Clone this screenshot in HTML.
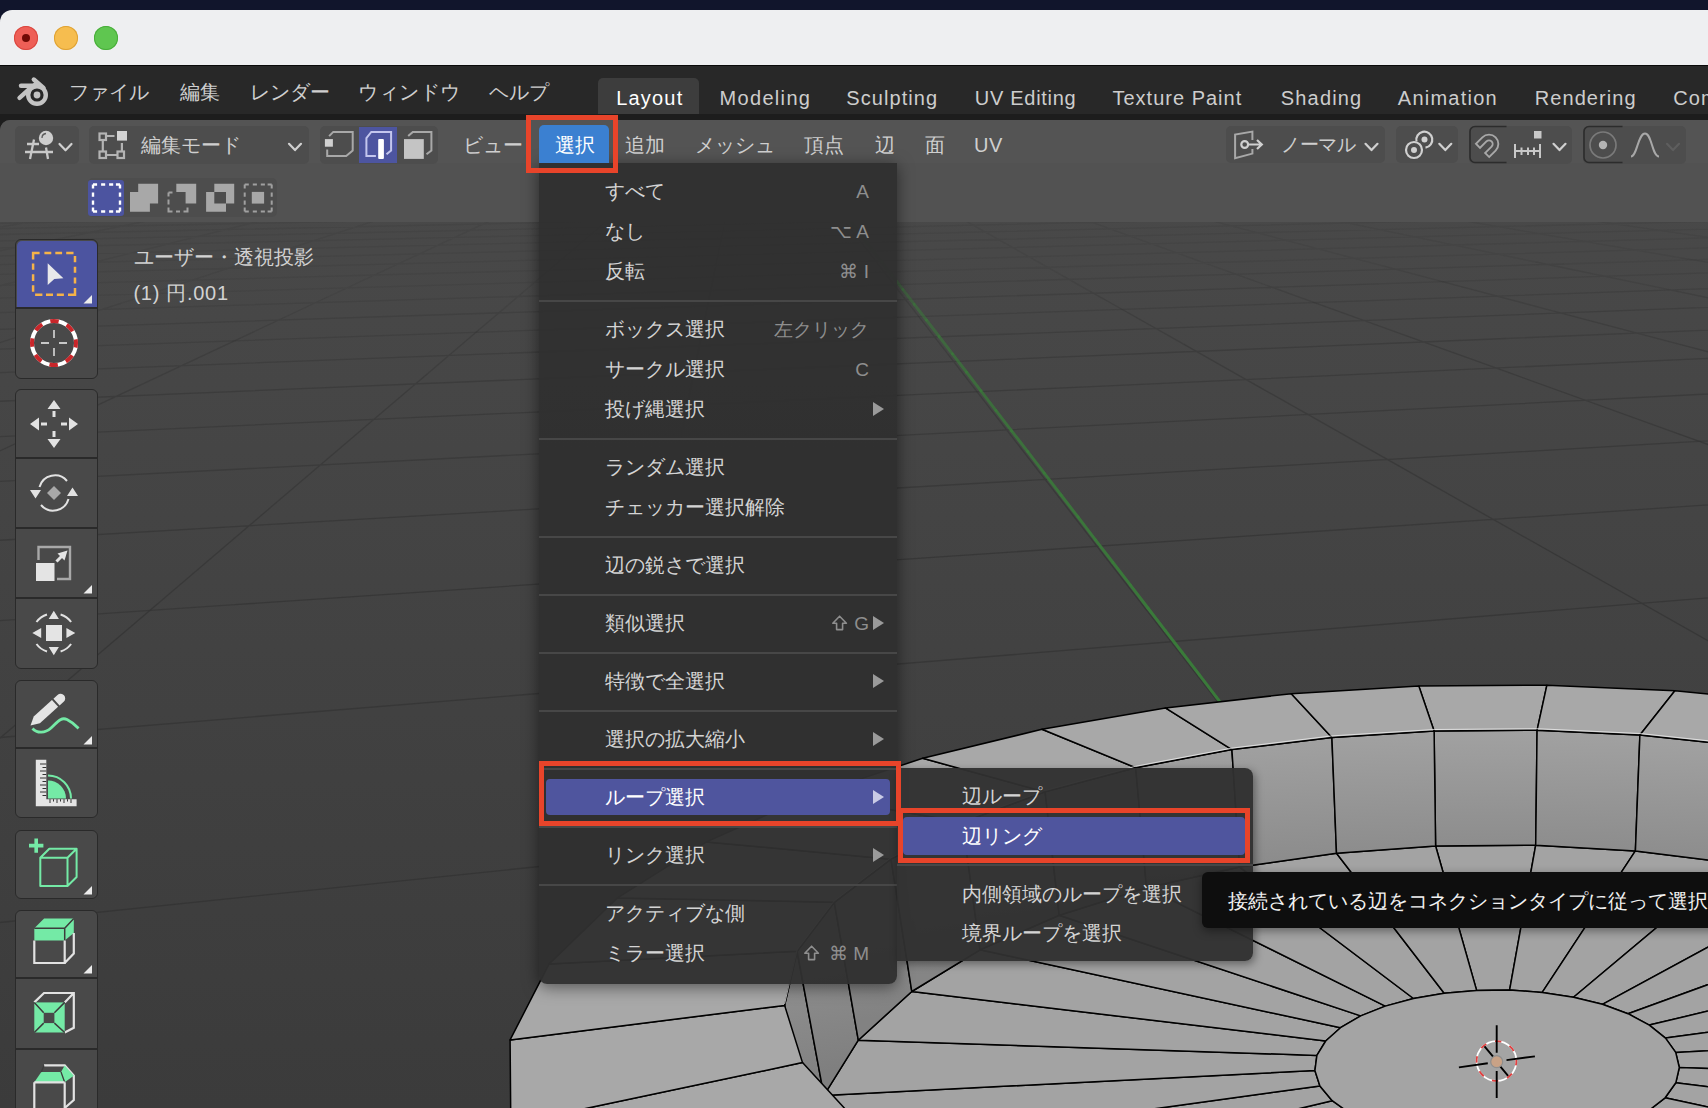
<!DOCTYPE html>
<html><head><meta charset="utf-8"><title>Blender</title>
<style>
html,body{margin:0;padding:0;width:1708px;height:1108px;overflow:hidden;}
body{background:#11152c;font-family:"Liberation Sans",sans-serif;}
#w{position:relative;width:1708px;height:1108px;overflow:hidden;}
.r{position:absolute;box-sizing:content-box;}
.t{position:absolute;white-space:nowrap;}
</style></head><body><div id="w">
<div class="r" style="left:0px;top:10px;width:1708px;height:56px;background:#eeeff1;border-top-left-radius:12px;"></div>
<div class="r" style="left:0px;top:65px;width:1708px;height:1px;background:#0a0a0a;"></div>
<div class="r" style="left:14px;top:26px;width:24px;height:24px;border-radius:50%;background:#ee5f57;box-shadow:inset 0 0 0 1px #d9473f"></div><div class="r" style="left:22px;top:34px;width:8px;height:8px;border-radius:50%;background:#700a05"></div><div class="r" style="left:54px;top:26px;width:24px;height:24px;border-radius:50%;background:#f6bd4f;box-shadow:inset 0 0 0 1px #dea235"></div><div class="r" style="left:94px;top:26px;width:24px;height:24px;border-radius:50%;background:#5fc650;box-shadow:inset 0 0 0 1px #48ad3a"></div><div class="r" style="left:0px;top:66px;width:1708px;height:48px;background:#282828;"></div>
<div class="r" style="left:0px;top:114px;width:1708px;height:30px;background:#1d1d1d;"></div>
<svg class="r" style="left:0;top:66px" width="60" height="48" viewBox="0 66 60 48">
<circle cx="37" cy="95" r="8.8" fill="none" stroke="#c4c4c4" stroke-width="4.4"/>
<circle cx="37" cy="95" r="3.4" fill="#c4c4c4"/>
<path d="M19.5 97.8L30 88.5" stroke="#c4c4c4" stroke-width="4.4" stroke-linecap="round"/>
<path d="M21 85.7H35" stroke="#c4c4c4" stroke-width="4.4" stroke-linecap="round"/>
<path d="M33.8 79.5L43.5 88" stroke="#c4c4c4" stroke-width="4.4" stroke-linecap="round"/>
<path d="M28.5 90L35 84.5L40 86" stroke="#c4c4c4" stroke-width="4" fill="none"/>
</svg>
<div class="t" style="left:69px;top:82.0px;font-size:20px;line-height:20px;color:#cfcfcf;">ファイル</div>
<div class="t" style="left:180px;top:82.0px;font-size:20px;line-height:20px;color:#cfcfcf;">編集</div>
<div class="t" style="left:250px;top:82.0px;font-size:20px;line-height:20px;color:#cfcfcf;">レンダー</div>
<div class="t" style="left:358px;top:82.0px;font-size:20px;line-height:20px;color:#cfcfcf;letter-spacing:0.6px;">ウィンドウ</div>
<div class="t" style="left:489px;top:82.0px;font-size:20px;line-height:20px;color:#cfcfcf;">ヘルプ</div>
<div class="r" style="left:598px;top:78px;width:101px;height:36px;background:#3d3d3d;border-radius:5px 5px 0 0;"></div>
<div class="t lat" style="left:616.2px;top:87.5px;font-size:20px;line-height:20px;color:#ffffff;letter-spacing:1.2px">Layout</div>
<div class="t lat" style="left:719.5px;top:87.5px;font-size:20px;line-height:20px;color:#cdcdcd;letter-spacing:1.33px">Modeling</div>
<div class="t lat" style="left:846.3px;top:87.5px;font-size:20px;line-height:20px;color:#cdcdcd;letter-spacing:1.06px">Sculpting</div>
<div class="t lat" style="left:974.8px;top:87.5px;font-size:20px;line-height:20px;color:#cdcdcd;letter-spacing:0.71px">UV Editing</div>
<div class="t lat" style="left:1112.5px;top:87.5px;font-size:20px;line-height:20px;color:#cdcdcd;letter-spacing:1.0px">Texture Paint</div>
<div class="t lat" style="left:1280.8px;top:87.5px;font-size:20px;line-height:20px;color:#cdcdcd;letter-spacing:1.17px">Shading</div>
<div class="t lat" style="left:1397.8px;top:87.5px;font-size:20px;line-height:20px;color:#cdcdcd;letter-spacing:1.25px">Animation</div>
<div class="t lat" style="left:1534.8px;top:87.5px;font-size:20px;line-height:20px;color:#cdcdcd;letter-spacing:1.06px">Rendering</div>
<div class="t lat" style="left:1673.3px;top:87.5px;font-size:20px;line-height:20px;color:#cdcdcd;letter-spacing:1.1px">Compositing</div>
<div class="r" style="left:0;top:120px;width:1708px;height:988px;border-top-left-radius:10px;overflow:hidden;background:linear-gradient(#4a4a4a,#3b3b3b)"><svg width="1708" height="1108" viewBox="0 0 1708 1108" style="position:absolute;left:0;top:-120px"><path d="M1563.2 264.0L1713.3 259.3M-42.8 299.3L1733.2 247.2M-96.8 288.1L1758.9 236.5M-42.7 275.5L1790.1 226.9M-101.6 267.1L1736.5 220.6M-53.0 257.1L1774.5 212.7M-9.9 248.2L1727.1 207.6M-71.8 242.5L1770.8 201.0M-31.6 235.2L1727.9 196.9M-97.8 230.7L1776.7 191.3M-59.8 224.5L1737.3 187.8M-25.1 218.9L1790.7 182.9M-94.1 215.7L1754.1 180.0M-60.5 210.8L1719.8 177.4M-29.6 206.4L1777.4 173.3M-101.6 204.0L1745.0 171.0M-71.1 200.1L1714.5 168.9M-42.8 196.5L1775.8 165.3M-16.5 193.1L1746.6 163.5M-89.9 191.5L1718.9 161.8M-63.5 188.5L1783.8 158.7M-38.8 185.6L1756.9 157.2M-15.6 182.9L1731.4 155.8M-91.0 181.9L1799.9 153.0M-67.3 179.5L1774.9 151.7M-45.0 177.2L1750.9 150.6M-24.0 175.0L1728.1 149.4M-102.0 174.4L1799.5 147.0M-80.3 172.4L1776.9 146.0M-59.7 170.5L1755.2 145.1M-40.2 168.7L1734.4 144.1M-21.6 166.9L1714.4 143.3M-101.0 166.6L1788.0 141.2M-81.7 165.0L1768.0 140.4M-63.3 163.5L1748.8 139.6M-45.7 162.0L1730.2 138.9M-28.9 160.6L1806.9 137.0M-12.8 159.3L1788.2 136.3M-92.8 159.2L1770.2 135.7M-75.8 158.0L1752.7 135.1M-59.6 156.7L1735.9 134.5M-44.0 155.6L1719.5 134.0M-29.1 154.5L1798.0 132.3M-14.7 153.4L1781.4 131.8M-96.1 153.5L1765.3 131.3M-80.9 152.5L1749.7 130.8M-66.2 151.5L1734.6 130.3M-52.0 150.5L1719.9 129.9M-38.3 149.6L1800.4 128.4M-25.2 148.7L1785.4 127.9M-12.4 147.9L1770.8 127.6M-94.8 148.1L1756.6 127.2M-81.2 147.3L1742.8 126.8M-68.0 146.5L1729.3 126.4M-55.3 145.7L1716.2 126.1M-43.0 145.0L1798.3 124.7M-31.0 144.2L1784.8 124.4M-19.5 143.5L1771.7 124.1M-8.3 142.9L1758.9 123.8M-91.2 143.2L1746.4 123.5M-79.1 142.5L1734.2 123.2M-67.4 141.9L1722.2 122.9M-56.0 141.3L1806.3 121.6M-45.0 140.7L1794.0 121.4M-34.2 140.1L1781.9 121.1M-23.8 139.5L1770.2 120.9M-13.6 138.9L1758.7 120.7M-98.0 139.4L1747.4 120.4M-87.0 138.8L1736.4 120.2M-76.3 138.3L1725.6 120.0M-65.9 137.8L1715.1 119.8M-55.8 137.3L1800.2 118.6M-45.9 136.8L1789.2 118.4M-36.3 136.3L1778.5 118.2M-26.9 135.8L1768.0 118.0M-17.7 135.4L1757.7 117.8M-8.8 134.9L1747.5 117.6M-93.4 135.4L1737.6 117.5M-83.7 135.0L1727.9 117.3M-74.2 134.6L1718.3 117.1M-64.9 134.1L1805.0 116.0M-55.9 133.7L1795.0 115.9M-47.0 133.3L1785.3 115.7M-38.4 132.9L1775.7 115.6M-29.9 132.6L1766.3 115.4M-21.7 132.2L1757.0 115.3M-13.6 131.8L1747.9 115.1M-5.7 131.5L1739.0 115.0M-90.6 132.0L1730.2 114.9M-82.0 131.6L1721.6 114.7M-73.5 131.3L1713.1 114.6M-65.2 131.0L1800.6 113.6M-57.1 130.6L1791.7 113.5M-49.2 130.3L1783.0 113.3M-41.4 130.0L1774.4 113.2M-33.8 129.7L1765.9 113.1M-26.3 129.4L1757.6 113.0M-19.0 129.1L1749.4 112.9M-11.8 128.8L1741.4 112.8M-98.1 129.3L1733.4 112.7M-90.2 129.0L1725.6 112.6M-82.5 128.7L1717.9 112.5M-74.9 128.5L1806.8 111.5M-67.4 128.2L1798.7 111.4M-60.1 127.9L1790.8 111.3M-52.9 127.6L1782.9 111.2M-45.9 127.4L1775.2 111.1M-39.0 127.1L1767.6 111.1M-32.2 126.9L1760.1 111.0M-25.5 126.6L1752.7 110.9M-19.0 126.4L1745.4 110.8M-12.6 126.1L1738.2 110.7M-6.2 125.9L1731.1 110.7M-92.4 126.5L1724.1 110.6M-85.5 126.2L1717.2 110.5M-78.6 126.0L1807.0 109.6M-71.9 125.8L1799.8 109.5M-65.3 125.6L1792.6 109.4M-58.7 125.3L1785.5 109.4M-52.3 125.1L1778.6 109.3M-46.0 124.9L1771.7 109.2M-39.9 124.7L1671.4 110.0M-33.8 124.5L1665.2 109.9M-27.8 124.3L1659.1 109.8M-21.9 124.1L1653.1 109.8M-16.1 123.9L1647.1 109.7M-10.3 123.7L1641.2 109.6M-97.5 124.3L1635.4 109.6M-91.2 124.1L1629.6 109.5M-85.0 123.9L1624.0 109.4M-78.9 123.7L1618.4 109.4M-72.8 123.5L1531.3 110.0M-66.9 123.3L1526.3 109.9M-61.0 123.1L1521.3 109.9M-55.2 123.0L1516.4 109.8M-49.6 122.8L1511.6 109.7M-44.0 122.6L1434.0 110.3M-38.4 122.4L1363.3 110.8M-33.0 122.3L1359.4 110.7M56.6 121.4L1295.6 111.1M134.7 120.6L1188.4 111.9M260.1 119.5L1140.8 112.2M357.7 118.6L1028.2 113.0M539.1 117.0L885.4 114.1M-84.2 124.2L8.0 121.4M-62.4 124.0L27.2 121.2M-40.7 123.8L46.3 121.1M-19.2 123.7L65.3 120.9M-90.5 126.5L84.2 120.8M-66.3 126.3L103.0 120.6M-42.2 126.1L121.8 120.5M-18.2 125.9L140.4 120.3M-86.5 129.0L159.0 120.2M-59.6 128.8L177.5 120.0M-32.8 128.5L195.9 119.9M-6.2 128.3L214.3 119.7M-69.7 131.7L232.6 119.6M-39.9 131.4L250.7 119.4M-10.3 131.1L268.9 119.3M-70.8 134.8L286.9 119.1M-37.6 134.4L304.9 119.0M-97.5 138.5L322.7 118.8M-60.5 138.1L340.5 118.7M-23.8 137.7L358.3 118.5M-77.6 142.1L375.9 118.4M-36.6 141.6L393.5 118.3M-87.1 146.4L411.0 118.1M-41.6 145.9L428.5 118.0M-87.2 151.0L445.8 117.8M-36.7 150.5L463.1 117.7M-75.7 156.1L480.3 117.5M-19.9 155.4L497.5 117.4M-50.3 161.4L514.6 117.3M-77.1 168.0L531.6 117.1M-8.5 167.1L548.5 117.0M-22.6 174.1L565.4 116.9M-29.5 181.8L582.2 116.7M-27.5 190.0L598.9 116.6M-14.9 198.9L615.6 116.4M-73.7 220.8L632.2 116.3M-27.7 231.8L648.7 116.2M-40.7 259.0L665.2 116.0M-16.9 290.0L681.5 115.9M120.0 303.6L697.9 115.8M326.6 297.5L714.1 115.6M523.6 291.8L730.3 115.5M714.9 270.0L746.5 115.4M879.1 265.5L762.5 115.2M1062.8 275.9L778.5 115.1M1227.2 271.1L794.5 115.0M1384.7 266.4L810.3 114.9M1535.7 262.0L826.1 114.7M1680.7 257.8L841.9 114.6M1739.0 241.9L857.6 114.5M1779.1 227.8L873.2 114.3M1720.2 206.0L888.7 114.2M1730.3 195.4L904.2 114.1M1730.4 185.9L919.7 114.0M1722.2 177.4L935.1 113.8M1793.9 176.1L950.4 113.7M1772.5 168.5L965.6 113.6M1746.0 161.7L980.8 113.5M1715.6 155.6L996.0 113.3M1768.9 154.8L1011.0 113.2M1730.7 149.3L1026.1 113.1M1778.8 148.7L1041.0 113.0M1734.4 143.8L1055.9 112.8M1777.8 143.2L1070.8 112.7M1728.8 138.9L1085.6 112.6M1768.0 138.4L1100.3 112.5M1715.5 134.5L1115.0 112.4M1751.0 134.1L1129.6 112.2M1786.2 133.7L1144.2 112.1M1728.3 130.3L1158.7 112.0M1760.2 129.9L1173.1 111.9M1791.8 129.6L1187.5 111.8M1729.8 126.6L1201.9 111.7M1758.6 126.3L1216.2 111.5M1787.1 125.9L1230.4 111.4M1722.3 123.3L1244.6 111.3M1748.3 123.0L1258.7 111.2M1774.0 122.8L1272.8 111.1M1799.6 122.5L1286.8 111.0M1730.9 120.2L1300.8 110.8M1754.2 120.0L1314.7 110.7M1777.4 119.7L1328.6 110.6M1800.4 119.5L1342.4 110.5M1729.0 117.5L1356.1 110.4M1750.0 117.3L1369.8 110.3M1770.9 117.1L1383.5 110.2M1791.6 116.9L1397.1 110.1M1718.6 115.1L1410.7 110.0M1737.5 114.9L1424.2 109.8M1756.4 114.8L1437.6 109.7M1775.2 114.6L1451.1 109.6M1793.8 114.4L1464.4 109.5M1718.4 112.9L1477.7 109.4M1735.5 112.7L1491.0 109.3M1752.5 112.6L1504.2 109.2M1769.4 112.4L1517.4 109.1M1786.2 112.3L1608.9 110.0M1802.9 112.1L1623.2 109.9M1724.9 110.8L1637.3 109.7M1740.2 110.7L1651.5 109.6M1755.4 110.6L1665.5 109.5M1770.6 110.4L1679.5 109.4M1785.7 110.3L1693.5 109.3M1800.8 110.2L1707.4 109.2" stroke="#333333" stroke-opacity="0.16" stroke-width="1.3" fill="none"/>
<path d="M1378.2 283.8L1782.6 270.4M-105.0 315.8L1563.2 264.0M56.6 324.2L120.0 303.6M285.1 317.0L326.6 297.5M502.0 310.2L523.6 291.8M708.0 303.7L714.9 270.0M903.9 297.5L879.1 265.5M1090.6 291.6L1062.8 275.9M1268.6 286.0L1227.2 271.1M1438.5 280.6L1384.7 266.4M1669.1 289.7L1535.7 262.0M1756.1 270.6L1680.7 257.8" stroke="#333333" stroke-opacity="0.24" stroke-width="1.3" fill="none"/>
<path d="M1694.4 307.9L1774.1 304.9M-13.6 349.6L573.5 328.8M890.4 317.6L1774.2 286.3M-56.6 331.2L1378.2 283.8M-12.3 346.6L56.6 324.2M240.3 338.1L285.1 317.0M478.7 330.0L502.0 310.2M704.2 322.4L708.0 303.7M917.6 315.1L903.9 297.5M1120.1 308.3L1090.6 291.6M1312.3 301.8L1268.6 286.0M1554.5 311.3L1438.5 280.6M1740.5 304.5L1669.1 289.7" stroke="#333333" stroke-opacity="0.32" stroke-width="1.3" fill="none"/>
<path d="M1505.9 338.5L1784.0 327.0M-90.5 376.1L1694.4 307.9M573.5 328.8L890.4 317.6M140.2 385.1L240.3 338.1M427.2 373.9L478.7 330.0M695.8 363.4L704.2 322.4M947.5 353.6L917.6 315.1M1184.0 344.4L1120.1 308.3M1406.6 335.8L1312.3 301.8M1680.7 344.6L1554.5 311.3" stroke="#333333" stroke-opacity="0.40" stroke-width="1.3" fill="none"/>
<path d="M-28.7 437.9L411.4 417.7M1086.4 386.8L1727.5 357.4M-56.2 403.6L1505.9 338.5M25.6 438.8L140.2 385.1M369.0 423.5L427.2 373.9M686.4 409.4L695.8 363.4M980.6 396.3L947.5 353.6M1254.1 384.1L1184.0 344.4M1509.0 372.7L1406.6 335.8M1747.1 362.1L1680.7 344.6" stroke="#333333" stroke-opacity="0.48" stroke-width="1.3" fill="none"/>
<path d="M1680.8 442.4L1748.6 438.4M-8.7 481.8L1764.9 391.1M411.4 417.7L1086.4 386.8M-37.1 468.3L25.6 438.8M269.6 508.3L369.0 423.5M676.1 459.9L686.4 409.4M1016.5 442.6L980.6 396.3M1368.7 448.9L1254.1 384.1M1674.3 432.4L1509.0 372.7" stroke="#333333" stroke-opacity="0.56" stroke-width="1.3" fill="none"/>
<path d="M-143.4 630.4L234.8 604.7M1278.0 534.0L1762.8 501.2M-133.3 548.0L1680.8 442.4M158.0 603.4L269.6 508.3M653.3 571.5L676.1 459.9M1094.5 543.1L1016.5 442.6M1531.1 540.8L1368.7 448.9M1731.5 453.0L1674.3 432.4" stroke="#333333" stroke-opacity="0.64" stroke-width="1.3" fill="none"/>
<path d="M-19.4 739.1L1756.3 593.9M234.8 604.7L1278.0 534.0M-42.3 774.2L158.0 603.4M617.1 748.4L653.3 571.5M1214.1 697.1L1094.5 543.1M1729.4 652.9L1531.1 540.8" stroke="#333333" stroke-opacity="0.72" stroke-width="1.3" fill="none"/>
<path d="M1048.0 1108.9L1797.6 1000.9M-72.2 930.0L1721.6 743.8M525.5 1196.9L617.1 748.4M1626.3 1228.4L1214.1 697.1" stroke="#333333" stroke-opacity="0.80" stroke-width="1.3" fill="none"/>
<path d="M1496.8 1061.4L1422.8 965.3" stroke="#3a7a3a" stroke-opacity="1.00" stroke-width="3" stroke-linecap="round" fill="none"/><path d="M1422.8 965.3L1416.3 956.8" stroke="#3a7a3a" stroke-opacity="1.00" stroke-width="3" stroke-linecap="round" fill="none"/><path d="M1416.3 956.8L1409.2 947.6" stroke="#3a7a3a" stroke-opacity="1.00" stroke-width="3" stroke-linecap="round" fill="none"/><path d="M1409.2 947.6L1401.6 937.8" stroke="#3a7a3a" stroke-opacity="1.00" stroke-width="3" stroke-linecap="round" fill="none"/><path d="M1401.6 937.8L1393.5 927.2" stroke="#3a7a3a" stroke-opacity="1.00" stroke-width="3" stroke-linecap="round" fill="none"/><path d="M1393.5 927.2L1384.8 915.9" stroke="#3a7a3a" stroke-opacity="1.00" stroke-width="3" stroke-linecap="round" fill="none"/><path d="M1384.8 915.9L1375.5 903.8" stroke="#3a7a3a" stroke-opacity="1.00" stroke-width="3" stroke-linecap="round" fill="none"/><path d="M1375.5 903.8L1365.6 890.9" stroke="#3a7a3a" stroke-opacity="1.00" stroke-width="3" stroke-linecap="round" fill="none"/><path d="M1365.6 890.9L1355.1 877.2" stroke="#3a7a3a" stroke-opacity="1.00" stroke-width="3" stroke-linecap="round" fill="none"/><path d="M1355.1 877.2L1343.9 862.7" stroke="#3a7a3a" stroke-opacity="1.00" stroke-width="3" stroke-linecap="round" fill="none"/><path d="M1343.9 862.7L1332.1 847.4" stroke="#3a7a3a" stroke-opacity="1.00" stroke-width="3" stroke-linecap="round" fill="none"/><path d="M1332.1 847.4L1319.7 831.2" stroke="#3a7a3a" stroke-opacity="1.00" stroke-width="3" stroke-linecap="round" fill="none"/><path d="M1319.7 831.2L1306.6 814.2" stroke="#3a7a3a" stroke-opacity="1.00" stroke-width="3" stroke-linecap="round" fill="none"/><path d="M1306.6 814.2L1292.9 796.4" stroke="#3a7a3a" stroke-opacity="1.00" stroke-width="3" stroke-linecap="round" fill="none"/><path d="M1292.9 796.4L1278.6 777.9" stroke="#3a7a3a" stroke-opacity="1.00" stroke-width="3" stroke-linecap="round" fill="none"/><path d="M1278.6 777.9L1263.8 758.6" stroke="#3a7a3a" stroke-opacity="1.00" stroke-width="3" stroke-linecap="round" fill="none"/><path d="M1263.8 758.6L1248.4 738.6" stroke="#3a7a3a" stroke-opacity="1.00" stroke-width="3" stroke-linecap="round" fill="none"/><path d="M1248.4 738.6L1232.5 718.0" stroke="#3a7a3a" stroke-opacity="1.00" stroke-width="3" stroke-linecap="round" fill="none"/><path d="M1232.5 718.0L1216.2 696.8" stroke="#3a7a3a" stroke-opacity="1.00" stroke-width="3" stroke-linecap="round" fill="none"/><path d="M1216.2 696.8L1199.6 675.1" stroke="#3a7a3a" stroke-opacity="1.00" stroke-width="3" stroke-linecap="round" fill="none"/><path d="M1199.6 675.1L1182.6 653.0" stroke="#3a7a3a" stroke-opacity="1.00" stroke-width="3" stroke-linecap="round" fill="none"/><path d="M1182.6 653.0L1165.3 630.6" stroke="#3a7a3a" stroke-opacity="0.99" stroke-width="3" stroke-linecap="round" fill="none"/><path d="M1165.3 630.6L1147.9 608.0" stroke="#3a7a3a" stroke-opacity="0.98" stroke-width="3" stroke-linecap="round" fill="none"/><path d="M1147.9 608.0L1130.4 585.2" stroke="#3a7a3a" stroke-opacity="0.96" stroke-width="3" stroke-linecap="round" fill="none"/><path d="M1130.4 585.2L1112.9 562.5" stroke="#3a7a3a" stroke-opacity="0.95" stroke-width="3" stroke-linecap="round" fill="none"/><path d="M1112.9 562.5L1095.4 539.8" stroke="#3a7a3a" stroke-opacity="0.93" stroke-width="3" stroke-linecap="round" fill="none"/><path d="M1095.4 539.8L1078.1 517.2" stroke="#3a7a3a" stroke-opacity="0.91" stroke-width="3" stroke-linecap="round" fill="none"/><path d="M1078.1 517.2L1061.0 495.0" stroke="#3a7a3a" stroke-opacity="0.89" stroke-width="3" stroke-linecap="round" fill="none"/><path d="M1061.0 495.0L1044.2 473.1" stroke="#3a7a3a" stroke-opacity="0.87" stroke-width="3" stroke-linecap="round" fill="none"/><path d="M1044.2 473.1L1027.7 451.7" stroke="#3a7a3a" stroke-opacity="0.84" stroke-width="3" stroke-linecap="round" fill="none"/><path d="M1027.7 451.7L1011.6 430.8" stroke="#3a7a3a" stroke-opacity="0.82" stroke-width="3" stroke-linecap="round" fill="none"/><path d="M1011.6 430.8L996.0 410.6" stroke="#3a7a3a" stroke-opacity="0.79" stroke-width="3" stroke-linecap="round" fill="none"/><path d="M996.0 410.6L980.9 390.9" stroke="#3a7a3a" stroke-opacity="0.75" stroke-width="3" stroke-linecap="round" fill="none"/><path d="M980.9 390.9L966.4 372.0" stroke="#3a7a3a" stroke-opacity="0.72" stroke-width="3" stroke-linecap="round" fill="none"/><path d="M966.4 372.0L952.4 353.9" stroke="#3a7a3a" stroke-opacity="0.68" stroke-width="3" stroke-linecap="round" fill="none"/><path d="M952.4 353.9L939.1 336.5" stroke="#3a7a3a" stroke-opacity="0.63" stroke-width="3" stroke-linecap="round" fill="none"/><path d="M939.1 336.5L926.4 320.0" stroke="#3a7a3a" stroke-opacity="0.58" stroke-width="3" stroke-linecap="round" fill="none"/><path d="M926.4 320.0L914.3 304.3" stroke="#3a7a3a" stroke-opacity="0.53" stroke-width="3" stroke-linecap="round" fill="none"/><path d="M914.3 304.3L902.8 289.4" stroke="#3a7a3a" stroke-opacity="0.47" stroke-width="3" stroke-linecap="round" fill="none"/><path d="M902.8 289.4L892.0 275.4" stroke="#3a7a3a" stroke-opacity="0.41" stroke-width="3" stroke-linecap="round" fill="none"/><path d="M892.0 275.4L881.8 262.1" stroke="#3a7a3a" stroke-opacity="0.34" stroke-width="3" stroke-linecap="round" fill="none"/><path d="M881.8 262.1L872.3 249.7" stroke="#3a7a3a" stroke-opacity="0.26" stroke-width="3" stroke-linecap="round" fill="none"/><path d="M872.3 249.7L863.3 238.0" stroke="#3a7a3a" stroke-opacity="0.25" stroke-width="3" stroke-linecap="round" fill="none"/><path d="M863.3 238.0L854.9 227.1" stroke="#3a7a3a" stroke-opacity="0.25" stroke-width="3" stroke-linecap="round" fill="none"/><path d="M854.9 227.1L847.1 217.0" stroke="#3a7a3a" stroke-opacity="0.25" stroke-width="3" stroke-linecap="round" fill="none"/><path d="M847.1 217.0L839.8 207.5" stroke="#3a7a3a" stroke-opacity="0.25" stroke-width="3" stroke-linecap="round" fill="none"/><path d="M839.8 207.5L833.0 198.7" stroke="#3a7a3a" stroke-opacity="0.25" stroke-width="3" stroke-linecap="round" fill="none"/><path d="M833.0 198.7L826.8 190.5" stroke="#3a7a3a" stroke-opacity="0.25" stroke-width="3" stroke-linecap="round" fill="none"/><path d="M826.8 190.5L820.9 183.0" stroke="#3a7a3a" stroke-opacity="0.25" stroke-width="3" stroke-linecap="round" fill="none"/><path d="M820.9 183.0L815.6 176.0" stroke="#3a7a3a" stroke-opacity="0.25" stroke-width="3" stroke-linecap="round" fill="none"/><path d="M815.6 176.0L810.6 169.5" stroke="#3a7a3a" stroke-opacity="0.25" stroke-width="3" stroke-linecap="round" fill="none"/><path d="M810.6 169.5L806.0 163.6" stroke="#3a7a3a" stroke-opacity="0.25" stroke-width="3" stroke-linecap="round" fill="none"/><path d="M806.0 163.6L801.8 158.1" stroke="#3a7a3a" stroke-opacity="0.25" stroke-width="3" stroke-linecap="round" fill="none"/><path d="M801.8 158.1L797.9 153.0" stroke="#3a7a3a" stroke-opacity="0.25" stroke-width="3" stroke-linecap="round" fill="none"/><path d="M797.9 153.0L794.3 148.4" stroke="#3a7a3a" stroke-opacity="0.25" stroke-width="3" stroke-linecap="round" fill="none"/><path d="M794.3 148.4L791.1 144.1" stroke="#3a7a3a" stroke-opacity="0.25" stroke-width="3" stroke-linecap="round" fill="none"/><path d="M791.1 144.1L788.1 140.2" stroke="#3a7a3a" stroke-opacity="0.25" stroke-width="3" stroke-linecap="round" fill="none"/><path d="M788.1 140.2L785.3 136.6" stroke="#3a7a3a" stroke-opacity="0.25" stroke-width="3" stroke-linecap="round" fill="none"/><path d="M785.3 136.6L782.8 133.3" stroke="#3a7a3a" stroke-opacity="0.25" stroke-width="3" stroke-linecap="round" fill="none"/><path d="M782.8 133.3L780.4 130.3" stroke="#3a7a3a" stroke-opacity="0.25" stroke-width="3" stroke-linecap="round" fill="none"/>
<path d="M1435.6 846.0L1535.7 845.2L1509.6 990.1L1476.6 990.4Z" fill="#a3a3a3" stroke="#000" stroke-width="1.5" stroke-linejoin="round"/>
<path d="M1535.7 845.2L1635.4 850.9L1542.2 992.4L1509.6 990.1Z" fill="#a3a3a3" stroke="#000" stroke-width="1.5" stroke-linejoin="round"/>
<path d="M1635.4 850.9L1733.5 863.1L1573.5 997.2L1542.2 992.4Z" fill="#a3a3a3" stroke="#000" stroke-width="1.5" stroke-linejoin="round"/>
<path d="M1733.5 863.1L1828.3 882.2L1602.4 1004.3L1573.5 997.2Z" fill="#a3a3a3" stroke="#000" stroke-width="1.5" stroke-linejoin="round"/>
<path d="M1828.3 882.2L1918.0 908.2L1628.0 1013.7L1602.4 1004.3Z" fill="#a3a3a3" stroke="#000" stroke-width="1.5" stroke-linejoin="round"/>
<path d="M1918.0 908.2L2000.3 941.3L1649.3 1025.1L1628.0 1013.7Z" fill="#a3a3a3" stroke="#000" stroke-width="1.5" stroke-linejoin="round"/>
<path d="M2000.3 941.3L2072.4 981.8L1665.5 1038.1L1649.3 1025.1Z" fill="#a3a3a3" stroke="#000" stroke-width="1.5" stroke-linejoin="round"/>
<path d="M2072.4 981.8L2130.5 1029.4L1675.7 1052.4L1665.5 1038.1Z" fill="#a3a3a3" stroke="#000" stroke-width="1.5" stroke-linejoin="round"/>
<path d="M2130.5 1029.4L2170.2 1083.8L1679.3 1067.5L1675.7 1052.4Z" fill="#a3a3a3" stroke="#000" stroke-width="1.5" stroke-linejoin="round"/>
<path d="M2170.2 1083.8L2186.6 1143.9L1675.8 1082.8L1679.3 1067.5Z" fill="#a3a3a3" stroke="#000" stroke-width="1.5" stroke-linejoin="round"/>
<path d="M2186.6 1143.9L2174.5 1207.8L1665.1 1097.8L1675.8 1082.8Z" fill="#a3a3a3" stroke="#000" stroke-width="1.5" stroke-linejoin="round"/>
<path d="M2174.5 1207.8L2129.0 1272.7L1647.3 1111.7L1665.1 1097.8Z" fill="#a3a3a3" stroke="#000" stroke-width="1.5" stroke-linejoin="round"/>
<path d="M884.9 1284.0L832.4 1219.8L1332.2 1100.7L1351.4 1114.3Z" fill="#a3a3a3" stroke="#000" stroke-width="1.5" stroke-linejoin="round"/>
<path d="M832.4 1219.8L813.6 1155.9L1319.9 1085.9L1332.2 1100.7Z" fill="#a3a3a3" stroke="#000" stroke-width="1.5" stroke-linejoin="round"/>
<path d="M813.6 1155.9L823.9 1095.4L1314.9 1070.6L1319.9 1085.9Z" fill="#a3a3a3" stroke="#000" stroke-width="1.5" stroke-linejoin="round"/>
<path d="M823.9 1095.4L858.3 1040.2L1316.9 1055.4L1314.9 1070.6Z" fill="#a3a3a3" stroke="#000" stroke-width="1.5" stroke-linejoin="round"/>
<path d="M858.3 1040.2L911.8 991.5L1325.7 1041.0L1316.9 1055.4Z" fill="#a3a3a3" stroke="#000" stroke-width="1.5" stroke-linejoin="round"/>
<path d="M911.8 991.5L980.0 949.8L1340.5 1027.7L1325.7 1041.0Z" fill="#a3a3a3" stroke="#000" stroke-width="1.5" stroke-linejoin="round"/>
<path d="M980.0 949.8L1059.2 915.2L1360.7 1015.9L1340.5 1027.7Z" fill="#a3a3a3" stroke="#000" stroke-width="1.5" stroke-linejoin="round"/>
<path d="M1059.2 915.2L1146.5 887.7L1385.3 1006.1L1360.7 1015.9Z" fill="#a3a3a3" stroke="#000" stroke-width="1.5" stroke-linejoin="round"/>
<path d="M1146.5 887.7L1239.6 867.1L1413.5 998.5L1385.3 1006.1Z" fill="#a3a3a3" stroke="#000" stroke-width="1.5" stroke-linejoin="round"/>
<path d="M1239.6 867.1L1336.5 853.3L1444.2 993.2L1413.5 998.5Z" fill="#a3a3a3" stroke="#000" stroke-width="1.5" stroke-linejoin="round"/>
<path d="M1336.5 853.3L1435.6 846.0L1476.6 990.4L1444.2 993.2Z" fill="#a3a3a3" stroke="#000" stroke-width="1.5" stroke-linejoin="round"/>
<path d="M1476.6 990.4L1509.6 990.1L1542.2 992.4L1573.5 997.2L1602.4 1004.3L1628.0 1013.7L1649.3 1025.1L1665.5 1038.1L1675.7 1052.4L1679.3 1067.5L1675.8 1082.8L1665.1 1097.8L1647.3 1111.7L1622.8 1123.9L1592.6 1133.8L1557.9 1140.9L1520.4 1144.7L1481.7 1145.0L1443.8 1141.9L1408.4 1135.5L1377.2 1126.1L1351.4 1114.3L1332.2 1100.7L1319.9 1085.9L1314.9 1070.6L1316.9 1055.4L1325.7 1041.0L1340.5 1027.7L1360.7 1015.9L1385.3 1006.1L1413.5 998.5L1444.2 993.2Z" fill="#a4a4a4" stroke="#000" stroke-width="1.5" stroke-linejoin="round"/>
<linearGradient id="wg3741" gradientUnits="userSpaceOnUse" x1="1485.6" y1="730.6" x2="1485.7" y2="845.6"><stop offset="0" stop-color="#a1a1a1"/><stop offset="1" stop-color="#8d8d8d"/></linearGradient><path d="M1434.1 731.0L1537.1 730.2L1535.7 845.2L1435.6 846.0Z" fill="url(#wg3741)" stroke="#000" stroke-width="1.5" stroke-linejoin="round"/>
<linearGradient id="wg4084" gradientUnits="userSpaceOnUse" x1="1588.5" y1="732.6" x2="1585.6" y2="848.0"><stop offset="0" stop-color="#a1a1a1"/><stop offset="1" stop-color="#8d8d8d"/></linearGradient><path d="M1537.1 730.2L1639.9 735.0L1635.4 850.9L1535.7 845.2Z" fill="url(#wg4084)" stroke="#000" stroke-width="1.5" stroke-linejoin="round"/>
<linearGradient id="wg4427" gradientUnits="userSpaceOnUse" x1="1690.5" y1="740.4" x2="1684.4" y2="857.0"><stop offset="0" stop-color="#a1a1a1"/><stop offset="1" stop-color="#8d8d8d"/></linearGradient><path d="M1639.9 735.0L1741.0 745.7L1733.5 863.1L1635.4 850.9Z" fill="url(#wg4427)" stroke="#000" stroke-width="1.5" stroke-linejoin="round"/>
<linearGradient id="wg4770" gradientUnits="userSpaceOnUse" x1="790.9" y1="978.4" x2="818.7" y2="1125.7"><stop offset="0" stop-color="#8f8f8f"/><stop offset="1" stop-color="#7b7b7b"/></linearGradient><path d="M784.6 1005.4L797.1 951.3L823.9 1095.4L813.6 1155.9Z" fill="url(#wg4770)" stroke="#000" stroke-width="1.5" stroke-linejoin="round"/>
<linearGradient id="wg5111" gradientUnits="userSpaceOnUse" x1="815.7" y1="926.8" x2="841.1" y2="1067.8"><stop offset="0" stop-color="#939393"/><stop offset="1" stop-color="#7f7f7f"/></linearGradient><path d="M797.1 951.3L834.3 902.3L858.3 1040.2L823.9 1095.4Z" fill="url(#wg5111)" stroke="#000" stroke-width="1.5" stroke-linejoin="round"/>
<linearGradient id="wg5451" gradientUnits="userSpaceOnUse" x1="862.6" y1="880.7" x2="885.0" y2="1015.8"><stop offset="0" stop-color="#969696"/><stop offset="1" stop-color="#828282"/></linearGradient><path d="M834.3 902.3L891.0 859.2L911.8 991.5L858.3 1040.2Z" fill="url(#wg5451)" stroke="#000" stroke-width="1.5" stroke-linejoin="round"/>
<linearGradient id="wg5790" gradientUnits="userSpaceOnUse" x1="926.8" y1="840.7" x2="945.9" y2="970.6"><stop offset="0" stop-color="#999999"/><stop offset="1" stop-color="#858585"/></linearGradient><path d="M891.0 859.2L962.5 822.3L980.0 949.8L911.8 991.5Z" fill="url(#wg5790)" stroke="#000" stroke-width="1.5" stroke-linejoin="round"/>
<linearGradient id="wg6127" gradientUnits="userSpaceOnUse" x1="1003.8" y1="807.1" x2="1019.6" y2="932.5"><stop offset="0" stop-color="#9c9c9c"/><stop offset="1" stop-color="#888888"/></linearGradient><path d="M962.5 822.3L1045.1 791.9L1059.2 915.2L980.0 949.8Z" fill="url(#wg6127)" stroke="#000" stroke-width="1.5" stroke-linejoin="round"/>
<linearGradient id="wg6468" gradientUnits="userSpaceOnUse" x1="1090.4" y1="779.8" x2="1102.9" y2="901.5"><stop offset="0" stop-color="#9e9e9e"/><stop offset="1" stop-color="#8a8a8a"/></linearGradient><path d="M1045.1 791.9L1135.7 767.7L1146.5 887.7L1059.2 915.2Z" fill="url(#wg6468)" stroke="#000" stroke-width="1.5" stroke-linejoin="round"/>
<linearGradient id="wg6811" gradientUnits="userSpaceOnUse" x1="1183.8" y1="758.7" x2="1193.1" y2="877.4"><stop offset="0" stop-color="#9f9f9f"/><stop offset="1" stop-color="#8b8b8b"/></linearGradient><path d="M1135.7 767.7L1231.9 749.6L1239.6 867.1L1146.5 887.7Z" fill="url(#wg6811)" stroke="#000" stroke-width="1.5" stroke-linejoin="round"/>
<linearGradient id="wg7154" gradientUnits="userSpaceOnUse" x1="1281.9" y1="743.5" x2="1288.0" y2="860.2"><stop offset="0" stop-color="#a0a0a0"/><stop offset="1" stop-color="#8c8c8c"/></linearGradient><path d="M1231.9 749.6L1331.9 737.4L1336.5 853.3L1239.6 867.1Z" fill="url(#wg7154)" stroke="#000" stroke-width="1.5" stroke-linejoin="round"/>
<linearGradient id="wg7497" gradientUnits="userSpaceOnUse" x1="1383.0" y1="734.2" x2="1386.1" y2="849.6"><stop offset="0" stop-color="#a1a1a1"/><stop offset="1" stop-color="#8d8d8d"/></linearGradient><path d="M1331.9 737.4L1434.1 731.0L1435.6 846.0L1336.5 853.3Z" fill="url(#wg7497)" stroke="#000" stroke-width="1.5" stroke-linejoin="round"/>
<path d="M1418.8 686.1L1546.9 685.2L1537.1 730.2L1434.1 731.0Z" fill="#a8a8a8" stroke="#000" stroke-width="1.5" stroke-linejoin="round"/>
<path d="M1546.9 685.2L1674.9 690.7L1639.9 735.0L1537.1 730.2Z" fill="#a8a8a8" stroke="#000" stroke-width="1.5" stroke-linejoin="round"/>
<path d="M1674.9 690.7L1802.1 703.1L1741.0 745.7L1639.9 735.0Z" fill="#a8a8a8" stroke="#000" stroke-width="1.5" stroke-linejoin="round"/>
<path d="M562.7 1213.9L510.8 1124.3L802.5 1062.6L855.7 1120.4Z" fill="#a8a8a8" stroke="#000" stroke-width="1.5" stroke-linejoin="round"/>
<path d="M510.8 1124.3L510.1 1039.9L784.6 1005.4L802.5 1062.6Z" fill="#a8a8a8" stroke="#000" stroke-width="1.5" stroke-linejoin="round"/>
<path d="M510.1 1039.9L549.1 963.9L797.1 951.3L784.6 1005.4Z" fill="#a8a8a8" stroke="#000" stroke-width="1.5" stroke-linejoin="round"/>
<path d="M549.1 963.9L617.4 897.9L834.3 902.3L797.1 951.3Z" fill="#a8a8a8" stroke="#000" stroke-width="1.5" stroke-linejoin="round"/>
<path d="M617.4 897.9L706.4 841.9L891.0 859.2L834.3 902.3Z" fill="#a8a8a8" stroke="#000" stroke-width="1.5" stroke-linejoin="round"/>
<path d="M706.4 841.9L809.7 795.6L962.5 822.3L891.0 859.2Z" fill="#a8a8a8" stroke="#000" stroke-width="1.5" stroke-linejoin="round"/>
<path d="M809.7 795.6L922.7 758.3L1045.1 791.9L962.5 822.3Z" fill="#a8a8a8" stroke="#000" stroke-width="1.5" stroke-linejoin="round"/>
<path d="M922.7 758.3L1042.0 729.3L1135.7 767.7L1045.1 791.9Z" fill="#a8a8a8" stroke="#000" stroke-width="1.5" stroke-linejoin="round"/>
<path d="M1042.0 729.3L1165.4 707.9L1231.9 749.6L1135.7 767.7Z" fill="#a8a8a8" stroke="#000" stroke-width="1.5" stroke-linejoin="round"/>
<path d="M1165.4 707.9L1291.3 693.7L1331.9 737.4L1231.9 749.6Z" fill="#a8a8a8" stroke="#000" stroke-width="1.5" stroke-linejoin="round"/>
<path d="M1291.3 693.7L1418.8 686.1L1434.1 731.0L1331.9 737.4Z" fill="#a8a8a8" stroke="#000" stroke-width="1.5" stroke-linejoin="round"/>
<path d="M1434.1 729.5L1537.1 728.7M1537.1 728.7L1639.9 733.5M1639.9 733.5L1741.0 744.2M784.6 1003.9L797.1 949.8M797.1 949.8L834.3 900.8M834.3 900.8L891.0 857.7M891.0 857.7L962.5 820.8M962.5 820.8L1045.1 790.4M1045.1 790.4L1135.7 766.2M1135.7 766.2L1231.9 748.1M1231.9 748.1L1331.9 735.9M1331.9 735.9L1434.1 729.5" stroke="#f0f0f0" stroke-width="1" stroke-opacity="0.75" fill="none"/>
<g>
<circle cx="1496.5" cy="1061" r="19.9" fill="none" stroke="#ffffff" stroke-width="1.8"/>
<circle cx="1496.5" cy="1061" r="19.9" fill="none" stroke="#e04040" stroke-width="1.8" stroke-dasharray="6.5 9.1" stroke-dashoffset="2"/>
<path d="M1496.7 1025.2V1052.8M1496.7 1071V1097.9M1458.9 1067.4L1487.8 1063.3M1506.5 1060.1L1534.9 1056.4M1484.5 1046.3L1493.5 1057.2M1500 1066.2L1508.1 1075.9" stroke="#000" stroke-width="1.9"/>
<circle cx="1496.7" cy="1061.7" r="6" fill="#c9a286" stroke="#8e8e8e" stroke-width="1.2"/>
</g>
</svg></div>
<div class="r" style="left:0px;top:120px;width:1708px;height:43px;background:#545454;border-top-left-radius:10px;"></div>
<div class="r" style="left:0px;top:163px;width:1708px;height:59px;background:#525252;"></div>
<div class="r" style="left:15px;top:126px;width:64px;height:38px;background:#4d4d4d;border-radius:5px;"></div>
<div class="r" style="left:89px;top:126px;width:220px;height:38px;background:#4d4d4d;border-radius:5px;"></div>
<div class="r" style="left:320px;top:126px;width:118px;height:38px;background:#4d4d4d;border-radius:5px;"></div>
<div class="r" style="left:359px;top:127px;width:38px;height:36px;background:#4d55a0;border-radius:0px;"></div>
<div class="r" style="left:88px;top:178px;width:189px;height:39px;background:#4d4d4d;border-radius:5px;"></div>
<div class="r" style="left:88px;top:180px;width:36px;height:36px;background:#4c54a0;border-radius:3px;"></div>
<div class="r" style="left:1226px;top:126px;width:159px;height:37px;background:#4d4d4d;border-radius:5px;"></div>
<div class="r" style="left:1396px;top:126px;width:62px;height:37px;background:#4d4d4d;border-radius:5px;"></div>
<div class="r" style="left:1469px;top:126px;width:103px;height:38px;background:#4d4d4d;border-radius:5px;"></div>
<div class="r" style="left:1583px;top:126px;width:103px;height:38px;background:#4d4d4d;border-radius:5px;"></div>
<div class="t" style="left:141px;top:135px;font-size:20px;line-height:20px;color:#cfcfcf">編集モード</div>
<div class="t" style="left:1281px;top:135px;font-size:19px;line-height:20px;color:#cfcfcf;letter-spacing:-0.4px">ノーマル</div>
<svg class="r" style="left:0;top:0" width="1708" height="230" viewBox="0 0 1708 230"><g stroke="#c8c8c8" stroke-width="2.3" fill="none"><path d="M27 144H39M25 152H53M34 139.5L30 159M46 147.5L48 159"/></g><circle cx="46" cy="138" r="7.2" fill="#cdcdcd"/><path d="M42 138A4.5 4.5 0 0 1 46 133.5" stroke="#5a5a5a" stroke-width="1.3" fill="none"/><path d="M59.5 144L65.5 150.3L71.5 144" fill="none" stroke="#d0d0d0" stroke-width="2.2" stroke-linecap="round" stroke-linejoin="round"/><g stroke="#b4b4b4" stroke-width="2.2" fill="none"><rect x="99.5" y="133.5" width="6.5" height="6.5"/><rect x="99.5" y="151.5" width="6.5" height="6.5"/><rect x="117.5" y="151.5" width="6.5" height="6.5"/><path d="M106 136H114.5M102.8 140.3V151.3M121.9 143V151.3M106 155H117.3"/></g><rect x="117" y="131" width="10" height="9.6" fill="#d4d4d4"/><path d="M289 143.8L295 150.10000000000002L301 143.8" fill="none" stroke="#d0d0d0" stroke-width="2.2" stroke-linecap="round" stroke-linejoin="round"/><path d="M329.1 136.1L333.3 131.9H352.7V150.5L346.2 155.9H327.2V149.4" fill="none" stroke="#a8a8a8" stroke-width="2"/><rect x="324.9" y="139.1" width="8" height="7.6" fill="#d0d0d0"/><path d="M375.9 155.9H366.4V138L371.3 131.9H391.1V150.5L386.5 154.3" fill="none" stroke="#c3c6ee" stroke-width="2"/><rect x="378.2" y="139.1" width="5.7" height="19.8" rx="1" fill="#ffffff"/><path d="M408.2 136.1L412.8 131.9H431.4V150.5L426.5 154.3" fill="none" stroke="#a8a8a8" stroke-width="2"/><rect x="404" y="139.1" width="19.8" height="19.8" fill="#c4c4c4"/><path d="M93.0 184.5H97.1M93.0 211.5H97.1M93 184.5V188.6M120 184.5V188.6M101.1 184.5H105.2M101.1 211.5H105.2M93 192.6V196.7M120 192.6V196.7M109.1 184.5H113.2M109.1 211.5H113.2M93 200.6V204.7M120 200.6V204.7M115.9 184.5H120.0M115.9 211.5H120.0M93 207.4V211.5M120 207.4V211.5" stroke="#ffffff" stroke-width="2.4" fill="none"/><path d="M130 191.9H138.2V183.7H158.1V203.6H149.9V211.8H130Z" fill="#a8a8a8"/><path d="M176.3 183.7H196.2V203.6H185.6V191.9H176.3Z" fill="#a8a8a8"/><path d="M168.5 192.5H172.5M168.5 192.5V196.5M168.5 199.5V204.5M168.5 207.5V211.5H172.5M176 211.5H180M183.5 211.5H187.5V207.5" stroke="#a0a0a0" stroke-width="2" fill="none"/><path d="M214.3 183.7H234.2V203.6H214.3Z M206.1 191.9H226V211.8H206.1Z" fill="#a8a8a8" fill-rule="evenodd"/><path d="M244.7 184.5H248.8M244.7 211.5H248.8M244.7 184.5V188.6M271.7 184.5V188.6M252.8 184.5H256.9M252.8 211.5H256.9M244.7 192.6V196.7M271.7 192.6V196.7M260.8 184.5H264.9M260.8 211.5H264.9M244.7 200.6V204.7M271.7 200.6V204.7M267.6 184.5H271.7M267.6 211.5H271.7M244.7 207.4V211.5M271.7 207.4V211.5" stroke="#a0a0a0" stroke-width="2" fill="none"/><rect x="251.8" y="191.9" width="12.3" height="11.7" fill="#a8a8a8"/><path d="M1252.4 140V131.6L1235.1 134.6V158.3L1252.4 153.6V149" fill="none" stroke="#a8a8a8" stroke-width="2"/><circle cx="1244.7" cy="144.5" r="3.4" fill="none" stroke="#d0d0d0" stroke-width="2.2"/><path d="M1248.2 144.5H1261.5M1257 140L1261.8 144.5L1257 149" fill="none" stroke="#d0d0d0" stroke-width="2.2"/><path d="M1365.5 143.8L1371.5 150.10000000000002L1377.5 143.8" fill="none" stroke="#d0d0d0" stroke-width="2.2" stroke-linecap="round" stroke-linejoin="round"/><circle cx="1414" cy="150" r="8" fill="none" stroke="#d0d0d0" stroke-width="2.2"/><circle cx="1414" cy="150" r="3" fill="#d0d0d0"/><path d="M1416.5 141.5A8 8 0 1 1 1425.5 147.6" fill="none" stroke="#d0d0d0" stroke-width="2.2"/><circle cx="1424.5" cy="139.6" r="3" fill="#d0d0d0"/><path d="M1439.3 143.8L1445.3 150.10000000000002L1451.3 143.8" fill="none" stroke="#d0d0d0" stroke-width="2.2" stroke-linecap="round" stroke-linejoin="round"/><path d="M1506.5 126.5H1475A5 5 0 0 0 1470 131.5V157.5A5 5 0 0 0 1475 162.5H1506.5" fill="none" stroke="#2c2c2c" stroke-width="1.6"/><g transform="translate(1489,144) rotate(45)"><path d="M-6.5 10V0A6.5 6.5 0 0 1 6.5 0V10" fill="none" stroke="#a8a8a8" stroke-width="7.6"/><path d="M-6.5 8.2V0A6.5 6.5 0 0 1 6.5 0V8.2" fill="none" stroke="#4d4d4d" stroke-width="3.8"/></g><rect x="1534" y="131" width="7.5" height="7.5" fill="#c8c8c8"/><path d="M1515 144V158M1540 144V158M1515 151H1540M1521.5 147.5V155M1528 147.5V155M1534 147.5V155" stroke="#c8c8c8" stroke-width="2"/><path d="M1553.5 143.8L1559.5 150.10000000000002L1565.5 143.8" fill="none" stroke="#d0d0d0" stroke-width="2.2" stroke-linecap="round" stroke-linejoin="round"/><path d="M1622.5 126.5H1589A5 5 0 0 0 1584 131.5V157.5A5 5 0 0 0 1589 162.5H1622.5" fill="none" stroke="#2c2c2c" stroke-width="1.6"/><circle cx="1603" cy="145" r="13" fill="none" stroke="#7a7a7a" stroke-width="1.7"/><circle cx="1603" cy="145" r="4.2" fill="#b4b4b4"/><path d="M1631 156.5C1637 156.5 1638 133.5 1645 133.5S1652 156.5 1659 156.5" fill="none" stroke="#a8a8a8" stroke-width="2"/><path d="M1667 143.8L1673 150.10000000000002L1679 143.8" fill="none" stroke="#5e5e5e" stroke-width="2.2" stroke-linecap="round" stroke-linejoin="round"/></svg>
<div class="t" style="left:463px;top:135.0px;font-size:20px;line-height:20px;color:#cfcfcf;">ビュー</div>
<div class="t" style="left:625px;top:135.0px;font-size:20px;line-height:20px;color:#cfcfcf;">追加</div>
<div class="t" style="left:695px;top:135.0px;font-size:20px;line-height:20px;color:#cfcfcf;">メッシュ</div>
<div class="t" style="left:804px;top:135.0px;font-size:20px;line-height:20px;color:#cfcfcf;">頂点</div>
<div class="t" style="left:875px;top:135.0px;font-size:20px;line-height:20px;color:#cfcfcf;">辺</div>
<div class="t" style="left:925px;top:135.0px;font-size:20px;line-height:20px;color:#cfcfcf;">面</div>
<div class="t lat" style="left:974px;top:135px;font-size:20px;line-height:20px;color:#cfcfcf;letter-spacing:0.5px">UV</div>
<div class="r" style="left:15px;top:239px;width:83px;height:140px;background:#494949;border:1.5px solid #2a2a2a;border-radius:6px;box-sizing:border-box"></div>
<div class="r" style="left:16px;top:307px;width:81px;height:2px;background:#2a2a2a"></div>
<div class="r" style="left:16.5px;top:240.5px;width:80px;height:66.5px;background:#4c54a0;border-radius:5px 5px 0 0"></div>
<div class="r" style="left:15px;top:389px;width:83px;height:280px;background:#494949;border:1.5px solid #2a2a2a;border-radius:6px;box-sizing:border-box"></div>
<div class="r" style="left:16px;top:457px;width:81px;height:2px;background:#2a2a2a"></div>
<div class="r" style="left:16px;top:527px;width:81px;height:2px;background:#2a2a2a"></div>
<div class="r" style="left:16px;top:597px;width:81px;height:2px;background:#2a2a2a"></div>
<div class="r" style="left:15px;top:680px;width:83px;height:138px;background:#494949;border:1.5px solid #2a2a2a;border-radius:6px;box-sizing:border-box"></div>
<div class="r" style="left:16px;top:747px;width:81px;height:2px;background:#2a2a2a"></div>
<div class="r" style="left:15px;top:830px;width:83px;height:69px;background:#494949;border:1.5px solid #2a2a2a;border-radius:6px;box-sizing:border-box"></div>
<div class="r" style="left:15px;top:910px;width:83px;height:220px;background:#494949;border:1.5px solid #2a2a2a;border-radius:6px;box-sizing:border-box"></div>
<div class="r" style="left:16px;top:977px;width:81px;height:2px;background:#2a2a2a"></div>
<div class="r" style="left:16px;top:1047.5px;width:81px;height:2px;background:#2a2a2a"></div>
<svg class="r" style="left:0;top:0" width="110" height="1108" viewBox="0 0 110 1108">
<path d="M33.1 259.6V253.1H39.6M44.4 253.1H51.3M55.3 253.1H62.1M66.2 253.1H73.5M75 256.1V262.2M75 266.7V272.8M75 277.6V283.6M75 288V294.8H68M63.9 294.8H56.8M53 294.8H46M42.4 294.8H35.1M33.1 291.7V285.2M33.1 280.9V274.3M33.1 269.7V263.4" fill="none" stroke="#f6b348" stroke-width="2.5"/>
<path d="M47.7 263.2L63.4 278.3L54.3 279.1L47.7 284.9Z" fill="#e8e8ea"/>
<circle cx="54" cy="343" r="22" fill="none" stroke="#ffffff" stroke-width="4"/>
<circle cx="54" cy="343" r="22" fill="none" stroke="#c9262a" stroke-width="4" stroke-dasharray="8.6 8.6" stroke-dashoffset="4"/>
<path d="M54 330V338M54 348V356M41 343H49M59 343H67" stroke="#c8c8c8" stroke-width="1.8"/>
<path d="M54 400L47.5 409H60.5Z M54 448L47.5 439H60.5Z M30 424L39 417.5V430.5Z M78 424L69 417.5V430.5Z" fill="#e2e2e2"/>
<path d="M54 411V417M54 431V437M41 424H47M61 424H67" stroke="#e2e2e2" stroke-width="3"/>
<path d="M54 486L61 493L54 500L47 493Z" fill="#a8a8a8"/>
<path d="M39.5 487A16 16 0 0 1 67 481M68.5 499A16 16 0 0 1 41 505" fill="none" stroke="#e2e2e2" stroke-width="2"/>
<path d="M30 490H41L35.5 498.5Z M67 496H78L72.5 487.5Z" fill="#e2e2e2"/>
<path d="M38.5 560V547H70V579H57" fill="none" stroke="#a8a8a8" stroke-width="2.4"/>
<rect x="36" y="563" width="18.5" height="18" fill="#e4e4e4"/>
<path d="M56.5 561.5L63 555" stroke="#e4e4e4" stroke-width="3"/><path d="M67.5 550.5L57.5 553.5L64.5 560.5Z" fill="#e4e4e4"/>
<rect x="46" y="625" width="16" height="16" fill="#e4e4e4"/>
<path d="M53.8 610.8L48.7 619H58.9Z M53.8 655.2L48.7 647H58.9Z M32.3 633L41.2 627.9V638.1Z M75.3 633L66.4 627.9V638.1Z" fill="#e2e2e2"/>
<path d="M36.5 622A20.5 20.5 0 0 1 47 614.5M60.6 614.5A20.5 20.5 0 0 1 71.1 622M71.1 644A20.5 20.5 0 0 1 60.6 651.5M47 651.5A20.5 20.5 0 0 1 36.5 644" fill="none" stroke="#e2e2e2" stroke-width="2"/>
<g transform="translate(30.5,725.5) rotate(-42)"><path d="M0 0L8.5 -4.6H33V4.6H8.5Z" fill="#e4e4e4"/><path d="M35 -4.6H40.5A4.6 4.6 0 0 1 40.5 4.6H35Z" fill="#e4e4e4"/></g>
<path d="M32.5 728.5C37 733.5 45 733.5 51 728S61 716.5 67 719.5S76 726 78.5 728.5" fill="none" stroke="#74eaa6" stroke-width="2.8"/>
<path d="M35.8 759.8H46.3V799.2H76.6V806.3H35.8Z" fill="#e4e4e4"/>
<path d="M40 764H46.3M42.5 767.5H46.3M40 771H46.3M42.5 774.5H46.3M40 778H46.3M42.5 781.5H46.3M40 785H46.3M42.5 788.5H46.3M40 792H46.3M42.5 795.5H46.3M50 799.2V803M53.5 799.2V801.5M57 799.2V803M60.5 799.2V801.5M64 799.2V803M67.5 799.2V801.5M71 799.2V803" stroke="#333" stroke-width="1"/>
<path d="M48 798.5V780.5A18 18 0 0 1 66 798.5Z" fill="#74eaa6"/>
<path d="M48 775.5A23 23 0 0 1 71 798.5" fill="none" stroke="#74eaa6" stroke-width="2"/>
<path d="M36.2 838.5V852.7M29 845.6H43.4" stroke="#74eaa6" stroke-width="3.6"/>
<path d="M40.3 857.7L49.3 848.7H76.6V877L67.5 886H40.3Z M40.3 857.7H67.5V886M67.5 857.7L76.6 848.7" fill="none" stroke="#74eaa6" stroke-width="2" stroke-linejoin="round"/>
<path d="M34.3 928.2L44.1 918.4H73.8V932.9L64.7 940.4H34.3Z" fill="#74eaa6"/>
<path d="M34.3 928.2H64.7L73.8 918.4M64.7 928.2V940.4" fill="none" stroke="#3c3c3c" stroke-width="1.5"/>
<path d="M34.3 940.4V963H64.7V940.4M64.7 963L73.8 953.5V932.9" fill="none" stroke="#e2e2e2" stroke-width="2.2"/>
<path d="M34.3 1002.4L44 993H73.8V1027.8L64.7 1032.5M64.7 1002.4L73.8 993" fill="none" stroke="#e2e2e2" stroke-width="2.2"/>
<path d="M34.3 1002.4H64.7V1032.5H34.3Z" fill="#74eaa6"/><rect x="43.7" y="1012.8" width="10.7" height="10.3" fill="#494949"/>
<path d="M34.3 1002.4L43.7 1012.8M64.7 1002.4L54.4 1012.8M34.3 1032.5L43.7 1023.1M64.7 1032.5L54.4 1023.1" stroke="#3c3c3c" stroke-width="1.5"/>
<path d="M44 1065.4H64.7L73.8 1075.7V1100L64.7 1108" fill="none" stroke="#e2e2e2" stroke-width="2.2"/>
<path d="M34.3 1082.3L41.3 1072H61L64.7 1082.3Z" fill="#74eaa6"/><path d="M61 1072L64.7 1065.4L73.8 1075.7L64.7 1082.3Z" fill="#74eaa6"/>
<path d="M44 1065.4L41.3 1072M61 1072L64.7 1082.3" stroke="#3c3c3c" stroke-width="1.3"/>
<path d="M34.3 1082.3V1108M64.7 1082.3V1108M34.3 1082.3H64.7" fill="none" stroke="#e2e2e2" stroke-width="2.2"/>
<path d="M92 295V303.5H83.5Z" fill="#ececec"/><path d="M92 585V593.5H83.5Z" fill="#ececec"/><path d="M92 736V744.5H83.5Z" fill="#ececec"/><path d="M92 886V894.5H83.5Z" fill="#ececec"/><path d="M92 965V973.5H83.5Z" fill="#ececec"/></svg>
<div class="t" style="left:134px;top:247.0px;font-size:20px;line-height:20px;color:#d2d2d2;">ユーザー・透視投影</div>
<div class="t" style="left:133.5px;top:283.0px;font-size:20px;line-height:20px;color:#d2d2d2;letter-spacing:0.7px;">(1) 円.001</div>
<div class="r" style="left:539px;top:163px;width:358px;height:821px;background:rgba(48,48,48,0.96);border-radius:0 0 8px 8px;box-shadow:0 3px 16px rgba(0,0,0,0.5)"></div>
<div class="r" style="left:539px;top:125px;width:70px;height:38px;background:#3b80d1;border-radius:5px 5px 0 0;"></div>
<div class="t" style="left:555px;top:135.0px;font-size:20px;line-height:20px;color:#ffffff;">選択</div>
<div class="r" style="left:539px;top:300px;width:358px;height:2px;background:#474747;"></div>
<div class="r" style="left:539px;top:438px;width:358px;height:2px;background:#474747;"></div>
<div class="r" style="left:539px;top:536px;width:358px;height:2px;background:#474747;"></div>
<div class="r" style="left:539px;top:594px;width:358px;height:2px;background:#474747;"></div>
<div class="r" style="left:539px;top:652px;width:358px;height:2px;background:#474747;"></div>
<div class="r" style="left:539px;top:710px;width:358px;height:2px;background:#474747;"></div>
<div class="r" style="left:539px;top:768px;width:358px;height:2px;background:#474747;"></div>
<div class="r" style="left:539px;top:826px;width:358px;height:2px;background:#474747;"></div>
<div class="r" style="left:539px;top:884px;width:358px;height:2px;background:#474747;"></div>
<div class="r" style="left:546px;top:779px;width:344px;height:36px;background:#4f559e;border-radius:4px;"></div>
<div class="t" style="left:605px;top:181.0px;font-size:20px;line-height:20px;color:#d4d4d4;">すべて</div>
<div class="t" style="right:839px;top:181.5px;font-size:19px;line-height:19px;color:#8e8e8e;">A</div>
<div class="t" style="left:605px;top:221.0px;font-size:20px;line-height:20px;color:#d4d4d4;">なし</div>
<div class="t" style="right:839px;top:221.5px;font-size:19px;line-height:19px;color:#8e8e8e;">⌥ A</div>
<div class="t" style="left:605px;top:261.0px;font-size:20px;line-height:20px;color:#d4d4d4;">反転</div>
<div class="t" style="right:839px;top:261.5px;font-size:19px;line-height:19px;color:#8e8e8e;">⌘ I</div>
<div class="t" style="left:605px;top:319.0px;font-size:20px;line-height:20px;color:#d4d4d4;">ボックス選択</div>
<div class="t" style="right:839px;top:319.5px;font-size:19px;line-height:19px;color:#8e8e8e;">左クリック</div>
<div class="t" style="left:605px;top:359.0px;font-size:20px;line-height:20px;color:#d4d4d4;">サークル選択</div>
<div class="t" style="right:839px;top:359.5px;font-size:19px;line-height:19px;color:#8e8e8e;">C</div>
<div class="t" style="left:605px;top:399.0px;font-size:20px;line-height:20px;color:#d4d4d4;">投げ縄選択</div>
<svg class="r" style="left:873px;top:402px" width="11" height="14"><path d="M0 0L11 7L0 14Z" fill="#9a9a9a"/></svg>
<div class="t" style="left:605px;top:457.0px;font-size:20px;line-height:20px;color:#d4d4d4;">ランダム選択</div>
<div class="t" style="left:605px;top:497.0px;font-size:20px;line-height:20px;color:#d4d4d4;">チェッカー選択解除</div>
<div class="t" style="left:605px;top:555.0px;font-size:20px;line-height:20px;color:#d4d4d4;">辺の鋭さで選択</div>
<div class="t" style="left:605px;top:613.0px;font-size:20px;line-height:20px;color:#d4d4d4;">類似選択</div>
<svg class="r" style="left:832px;top:615px" width="16" height="16"><path d="M7.6 1.2L14.4 8.2H10.6V14.6H4.6V8.2H0.8Z" fill="none" stroke="#8e8e8e" stroke-width="1.6" stroke-linejoin="round"/></svg>
<div class="t" style="right:839px;top:613.5px;font-size:19px;line-height:19px;color:#8e8e8e;">G</div>
<svg class="r" style="left:873px;top:616px" width="11" height="14"><path d="M0 0L11 7L0 14Z" fill="#9a9a9a"/></svg>
<div class="t" style="left:605px;top:671.0px;font-size:20px;line-height:20px;color:#d4d4d4;">特徴で全選択</div>
<svg class="r" style="left:873px;top:674px" width="11" height="14"><path d="M0 0L11 7L0 14Z" fill="#9a9a9a"/></svg>
<div class="t" style="left:605px;top:729.0px;font-size:20px;line-height:20px;color:#d4d4d4;">選択の拡大縮小</div>
<svg class="r" style="left:873px;top:732px" width="11" height="14"><path d="M0 0L11 7L0 14Z" fill="#9a9a9a"/></svg>
<div class="t" style="left:605px;top:787.0px;font-size:20px;line-height:20px;color:#ffffff;">ループ選択</div>
<svg class="r" style="left:873px;top:790px" width="11" height="14"><path d="M0 0L11 7L0 14Z" fill="#c9cbe6"/></svg>
<div class="t" style="left:605px;top:845.0px;font-size:20px;line-height:20px;color:#d4d4d4;">リンク選択</div>
<svg class="r" style="left:873px;top:848px" width="11" height="14"><path d="M0 0L11 7L0 14Z" fill="#9a9a9a"/></svg>
<div class="t" style="left:605px;top:903.0px;font-size:20px;line-height:20px;color:#d4d4d4;">アクティブな側</div>
<div class="t" style="left:605px;top:943.0px;font-size:20px;line-height:20px;color:#d4d4d4;">ミラー選択</div>
<svg class="r" style="left:804px;top:945px" width="16" height="16"><path d="M7.6 1.2L14.4 8.2H10.6V14.6H4.6V8.2H0.8Z" fill="none" stroke="#8e8e8e" stroke-width="1.6" stroke-linejoin="round"/></svg>
<div class="t" style="right:839px;top:943.5px;font-size:19px;line-height:19px;color:#8e8e8e;">⌘ M</div>
<div class="r" style="left:897px;top:768px;width:356px;height:193px;background:rgba(48,48,48,0.96);border-radius:0 8px 8px 0;box-shadow:2px 3px 8px rgba(0,0,0,0.4)"></div>
<div class="r" style="left:903px;top:817px;width:342px;height:38px;background:#4f559e;border-radius:4px;"></div>
<div class="r" style="left:897px;top:864px;width:356px;height:2px;background:#474747;"></div>
<div class="t" style="left:962px;top:786.0px;font-size:20px;line-height:20px;color:#d4d4d4;">辺ループ</div>
<div class="t" style="left:962px;top:826.0px;font-size:20px;line-height:20px;color:#ffffff;">辺リング</div>
<div class="t" style="left:962px;top:884.0px;font-size:20px;line-height:20px;color:#d4d4d4;">内側領域のループを選択</div>
<div class="t" style="left:962px;top:923.0px;font-size:20px;line-height:20px;color:#d4d4d4;">境界ループを選択</div>
<div class="r" style="left:1202px;top:872px;width:540px;height:56px;background:#0e0e0e;border-radius:6px;box-shadow:0 3px 10px rgba(0,0,0,0.4)"></div>
<div class="t" style="left:1228px;top:891.0px;font-size:20px;line-height:20px;color:#f2f2f2;">接続されている辺をコネクションタイプに従って選択</div>
<div class="r" style="left:526px;top:115px;width:82px;height:47.5px;border:5px solid #e8442a"></div>
<div class="r" style="left:539px;top:761px;width:352px;height:55px;border:5px solid #e8442a"></div>
<div class="r" style="left:898px;top:808px;width:342px;height:45px;border:5px solid #e8442a"></div>

</div></body></html>
